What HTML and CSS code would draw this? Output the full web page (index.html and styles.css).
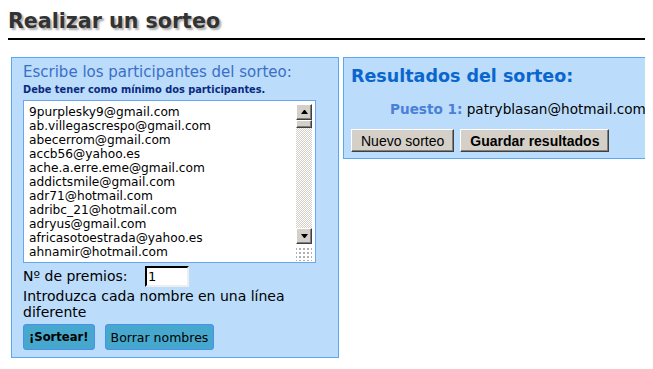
FILE: index.html
```html
<!DOCTYPE html>
<html lang="es">
<head>
<meta charset="utf-8">
<title>Realizar un sorteo</title>
<link rel="stylesheet" href="styles.css">
</head>
<body>
<h1 class="title">Realizar un sorteo</h1>
<div class="panels">
    <div class="panel left">
        <h2 class="subtitle">Escribe los participantes del sorteo:</h2>
        <p class="note">Debe tener como mínimo dos participantes.</p>
        <div class="listbox">
            <textarea class="names" spellcheck="false">9purplesky9@gmail.com
ab.villegascrespo@gmail.com
abecerrom@gmail.com
accb56@yahoo.es
ache.a.erre.eme@gmail.com
addictsmile@gmail.com
adr71@hotmail.com
adribc_21@hotmail.com
adryus@gmail.com
africasotoestrada@yahoo.es
ahnamir@hotmail.com</textarea>
            <div class="scroll">
                <span class="sbtn up"></span>
                <span class="thumb"></span>
                <span class="track"></span>
                <span class="sbtn down"></span>
                <span class="grip"></span>
            </div>
        </div>
        <div class="prizes">
            <label>Nº de premios:</label>
            <input class="num" type="text" value="1">
        </div>
        <p class="hint">Introduzca cada nombre en una línea diferente</p>
        <div class="actions">
            <button class="btn main">¡Sortear!</button>
            <button class="btn">Borrar nombres</button>
        </div>
    </div>
    <div class="panel right">
        <h2 class="result-title">Resultados del sorteo:</h2>
        <p class="place"><b>Puesto 1:</b> patryblasan@hotmail.com</p>
        <div class="actions">
            <button class="gbtn">Nuevo sorteo</button>
            <button class="gbtn bold">Guardar resultados</button>
        </div>
    </div>
</div>
</body>
</html>
```

FILE: styles.css
```css
* { margin: 0; padding: 0; }
body { margin: 8px; font-family: "DejaVu Sans", Verdana, sans-serif; color: #000; background: #fff; overflow: hidden; }
.title { font-size: 20.6px; font-weight: bold; color: #333; height: 30px; line-height: 27px; border-bottom: 2px solid #000; text-shadow: 2px 2px 2px #aaa; }
.panels { display: flex; align-items: flex-start; gap: 4px; margin: 17px 0 0 3px; }
.panel { background: #bbdcfa; border: 1px solid #5aa8f0; }
.left { width: 304px; padding: 4px 11px 7px 11px; flex-shrink: 0; }
.right { width: 320px; padding: 5px 8px 6px 7px; flex-shrink: 0; }
.subtitle { font-size: 15px; font-weight: normal; color: #3a6fc8; line-height: 20px; }
.note { font-size: 9.8px; font-weight: bold; color: #0a2a80; line-height: 15px; margin-bottom: 3px; }
.listbox { display: flex; width: 291px; height: 161px; background: #fff; border: 1px solid #6aa6ee; }
.names { flex: 1; border: 0; outline: 0; resize: none; overflow: hidden; padding: 4px 0 0 5px; font-family: "DejaVu Sans", Verdana, sans-serif; font-size: 12.2px; line-height: 14px; color: #000; background: #fff; }
.scroll { width: 16px; margin: 3px 3px 0 0; display: flex; flex-direction: column; }
.sbtn, .thumb { display: block; background: #d4d0c8; border: 1px solid; border-color: #fff #404040 #404040 #fff; box-shadow: inset -1px -1px 0 #808080; position: relative; }
.sbtn { height: 14px; }
.thumb { height: 6px; }
.sbtn::after { content: ""; position: absolute; left: 4px; border-left: 3px solid transparent; border-right: 3px solid transparent; width: 1px; }
.up::after { top: 5px; border-bottom: 4px solid #000; }
.down::after { top: 5px; border-top: 4px solid #000; }
.track { display: block; height: 100px; background: repeating-conic-gradient(#d4d0c8 0 25%, #fff 0 50%) 0 0 / 2px 2px; }
.grip { display: block; height: 14px; margin-top: 3px; background: radial-gradient(circle, #b0b0b0 1px, transparent 1.2px) 6px 4px / 4px 4px; }
.prizes { display: flex; align-items: center; font-size: 14px; margin-top: 2px; height: 22px; }
.prizes label { width: 122px; }
.num { width: 38px; height: 17px; border: 2px inset #eee; border-color: #404040 #eee #eee #404040; font-family: "DejaVu Sans", Verdana, sans-serif; font-size: 13px; padding: 0 1px; }
.hint { font-size: 14px; line-height: 16px; margin-top: 1px; width: 290px; }
.actions { display: flex; gap: 10px; margin-top: 4px; }
.btn { height: 26px; padding: 0 5px; background: #46a8cc; border: 1px solid #4a8ef0; border-radius: 3px; font-family: "DejaVu Sans", Verdana, sans-serif; font-size: 12.5px; color: #000; }
.btn.main { font-weight: bold; font-size: 11.6px; padding: 0 5px; }
.result-title { font-size: 17.5px; font-weight: bold; color: #0a66cc; line-height: 26px; }
.place { font-size: 13.6px; margin: 12px 0 0 39px; line-height: 16px; white-space: nowrap; }
.place b { color: #4a80d8; }
.right .actions { gap: 6px; margin-top: 12px; }
.gbtn { height: 23px; padding: 0 9px; background: #d4d0c8; border: 1px solid; border-color: #fff #404040 #404040 #fff; box-shadow: inset -1px -1px 0 #808080; font-family: "Liberation Sans", Arial, sans-serif; font-size: 14px; color: #000; }
.gbtn.bold { font-weight: bold; }
```
